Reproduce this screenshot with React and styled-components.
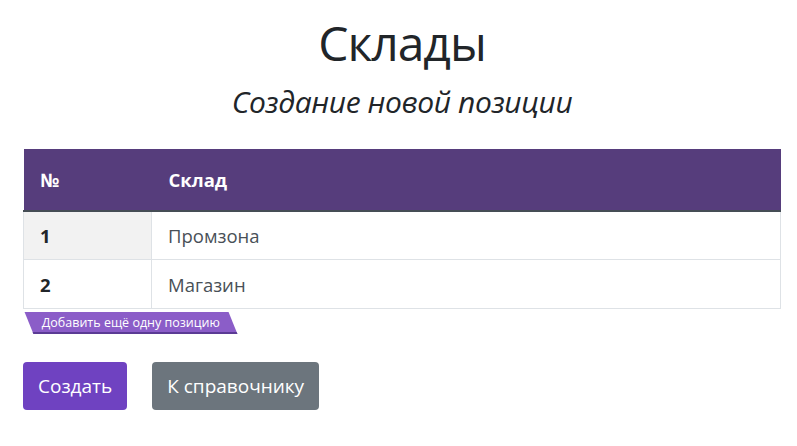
import React from "react";
import styled, { createGlobalStyle } from "styled-components";

const GlobalStyle = createGlobalStyle`
  body {
    margin: 0;
    background: #fff;
    font-family: "Open Sans", "Noto Sans", sans-serif;
    color: #212529;
  }
`;

const Page = styled.div`
  padding: 14px 16px 0 23px;
`;

const Title = styled.h1`
  margin: 0;
  text-align: center;
  font-size: 48px;
  font-weight: 400;
  line-height: 1.2;
  letter-spacing: -1px;
`;

const Subtitle = styled.h2`
  margin: 12px 0 0;
  text-align: center;
  font-size: 30px;
  font-weight: 400;
  font-style: italic;
  line-height: 1.2;
  letter-spacing: -0.4px;
`;

const Table = styled.table`
  margin-top: 29px;
  width: 100%;
  border-collapse: collapse;
  font-size: 18.5px;
`;

const HeadCell = styled.th`
  height: 62px;
  padding: 0 16px 0 17px;
  box-sizing: border-box;
  background: #563d7c;
  color: #fff;
  text-align: left;
  font-weight: 700;
  border-bottom: 2px solid #454d55;
  width: ${({ $w }) => $w || "auto"};
`;

const Cell = styled.td`
  height: 49px;
  padding: 0 16px;
  box-sizing: border-box;
  border: 1px solid #dee2e6;
  border-top: none;
  background: ${({ $shaded }) => ($shaded ? "#f2f2f2" : "#fff")};
  color: ${({ $bold }) => ($bold ? "#212529" : "#495057")};
  font-weight: ${({ $bold }) => ($bold ? 700 : 400)};
`;

const AddTag = styled.button`
  display: inline-block;
  margin: 1px 0 0 6px;
  height: 22px;
  padding: 0 13px;
  border: none;
  border-bottom: 2px solid #5b3b95;
  background: #8b5dc8;
  color: #fff;
  font-family: "Open Sans", "Noto Sans", sans-serif;
  font-size: 12.5px;
  transform: skewX(22deg);
  cursor: pointer;

  span {
    display: inline-block;
    transform: skewX(-22deg);
  }
`;

const Actions = styled.div`
  display: flex;
  gap: 25px;
  margin-top: 28px;
`;

const Button = styled.button`
  height: 48px;
  padding: 0 15px;
  border: none;
  border-radius: 4px;
  background: ${({ $variant }) => ($variant === "secondary" ? "#6c757d" : "#6f42c1")};
  color: #fff;
  font-family: "Open Sans", "Noto Sans", sans-serif;
  font-size: 19px;
  cursor: pointer;
`;

const rows = [
  { id: 1, name: "Промзона" },
  { id: 2, name: "Магазин" },
];

export default function App() {
  return (
    <>
      <GlobalStyle />
      <Page>
        <Title>Склады</Title>
        <Subtitle>Создание новой позиции</Subtitle>
        <Table>
          <thead>
            <tr>
              <HeadCell $w="128px">№</HeadCell>
              <HeadCell>Склад</HeadCell>
            </tr>
          </thead>
          <tbody>
            {rows.map((r, i) => (
              <tr key={r.id}>
                <Cell $bold $shaded={i === 0}>
                  {r.id}
                </Cell>
                <Cell>{r.name}</Cell>
              </tr>
            ))}
          </tbody>
        </Table>
        <AddTag>
          <span>Добавить ещё одну позицию</span>
        </AddTag>
        <Actions>
          <Button>Создать</Button>
          <Button $variant="secondary">К справочнику</Button>
        </Actions>
      </Page>
    </>
  );
}
